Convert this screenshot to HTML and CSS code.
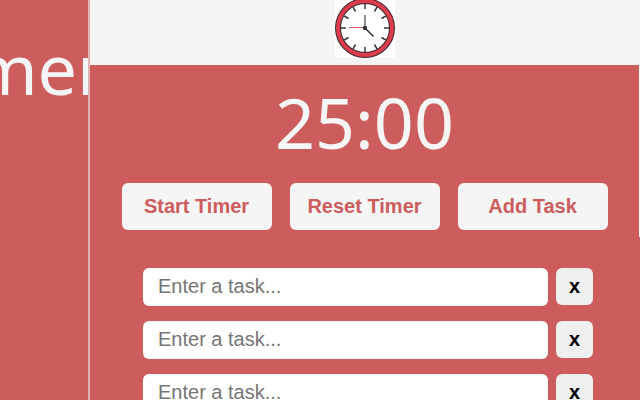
FILE: index.html
```html
<!DOCTYPE html>
<html lang="en">
<head>
<meta charset="utf-8">
<title>Timer</title>
<link rel="stylesheet" href="styles.css">
</head>
<body>
<div class="page">
  <aside class="side"><h1 class="title">Timer</h1></aside>
  <main class="panel">
    <header class="banner">
      <svg class="clock" viewBox="0 0 60 58" role="img" aria-label="Clock">
        <rect width="60" height="58" fill="#fff"/>
        <circle cx="30" cy="28" r="27" fill="#fff" stroke="#3a2930" stroke-width="6"/>
        <circle cx="30" cy="28" r="27" fill="none" stroke="#dc3c4c" stroke-width="4"/>
        <g stroke="#33363d" stroke-width="1.5">
          <path d="M30 4v5M30 47v5M6 28h5M49 28h5"/>
          <path d="M42 7.2l-2.5 4.3M50.8 16l-4.3 2.5M50.8 40l-4.3-2.5M42 48.8l-2.5-4.3M18 48.8l2.5-4.3M9.2 40l4.3-2.5M9.2 16l4.3 2.5M18 7.2l2.5 4.3"/>
        </g>
        <path d="M14 27.5h16" stroke="#e0566a" stroke-width="1"/>
        <path d="M30 28V15" stroke="#43464c" stroke-width="1.2"/>
        <path d="M30 28l8.5 8.5" stroke="#33363d" stroke-width="1.6"/>
        <circle cx="30" cy="28" r="2.2" fill="#33363d"/>
      </svg>
    </header>
    <div class="time">25:00</div>
    <div class="actions">
      <button class="action" type="button">Start Timer</button>
      <button class="action" type="button">Reset Timer</button>
      <button class="action" type="button">Add Task</button>
    </div>
    <ul class="tasks">
      <li class="task"><input class="entry" type="text" placeholder="Enter a task..." aria-label="Task 1"><button class="remove" type="button" aria-label="Remove task 1">x</button></li>
      <li class="task"><input class="entry" type="text" placeholder="Enter a task..." aria-label="Task 2"><button class="remove" type="button" aria-label="Remove task 2">x</button></li>
      <li class="task"><input class="entry" type="text" placeholder="Enter a task..." aria-label="Task 3"><button class="remove" type="button" aria-label="Remove task 3">x</button></li>
    </ul>
  </main>
  <div class="edge"></div>
</div>
</body>
</html>
```
FILE: styles.css
```css
* { box-sizing: border-box; }

body {
  margin: 0;
  background: #cd5c5c;
  color: #f5f5f5;
  font-family: "Liberation Sans", Arial, sans-serif;
}

.page {
  display: flex;
  height: 100vh;
  overflow: hidden;
}

.side {
  display: flex;
  justify-content: flex-end;
  flex: 0 0 90px;
  padding-top: 18px;
  overflow: hidden;
  border-right: 2px solid #dfb4b4;
}

.title,
.time {
  margin: 0;
  font: 400 70px/100px "Noto Sans", "Open Sans", sans-serif;
}

.title { margin-right: -18px; }

.panel {
  flex: 1;
  min-width: 0;
}

.banner {
  display: flex;
  justify-content: center;
  height: 65px;
  background: #f5f5f5;
}

.clock {
  width: 60px;
  height: 58px;
}

.time {
  padding-top: 7px;
  text-align: center;
}

.actions {
  display: flex;
  justify-content: center;
  gap: 18px;
  padding-top: 11px;
}

.action,
.remove {
  padding: 0 0 2px;
  border: 0;
  border-radius: 6px;
  font: bold 20px/24px "Liberation Sans", Arial, sans-serif;
}

.action {
  width: 150px;
  height: 47px;
  background: #f5f5f5;
  color: #cd5c5c;
}

.tasks {
  display: flex;
  flex-direction: column;
  gap: 15px;
  margin: 0;
  padding: 38px 46px 0 53px;
  list-style: none;
}

.task {
  display: flex;
  align-items: flex-start;
  gap: 8px;
}

.entry {
  flex: 1;
  min-width: 0;
  height: 38px;
  padding: 0 15px 2px;
  border: 0;
  border-radius: 6px;
  background: #fff;
  font: 20px "Liberation Sans", Arial, sans-serif;
}

.entry::placeholder { color: #757575; }

.remove {
  width: 37px;
  height: 37px;
  background: #efefef;
  color: #000;
}

.edge {
  flex: 0 0 1px;
  height: 237px;
  background: #f5f5f5;
}
```
